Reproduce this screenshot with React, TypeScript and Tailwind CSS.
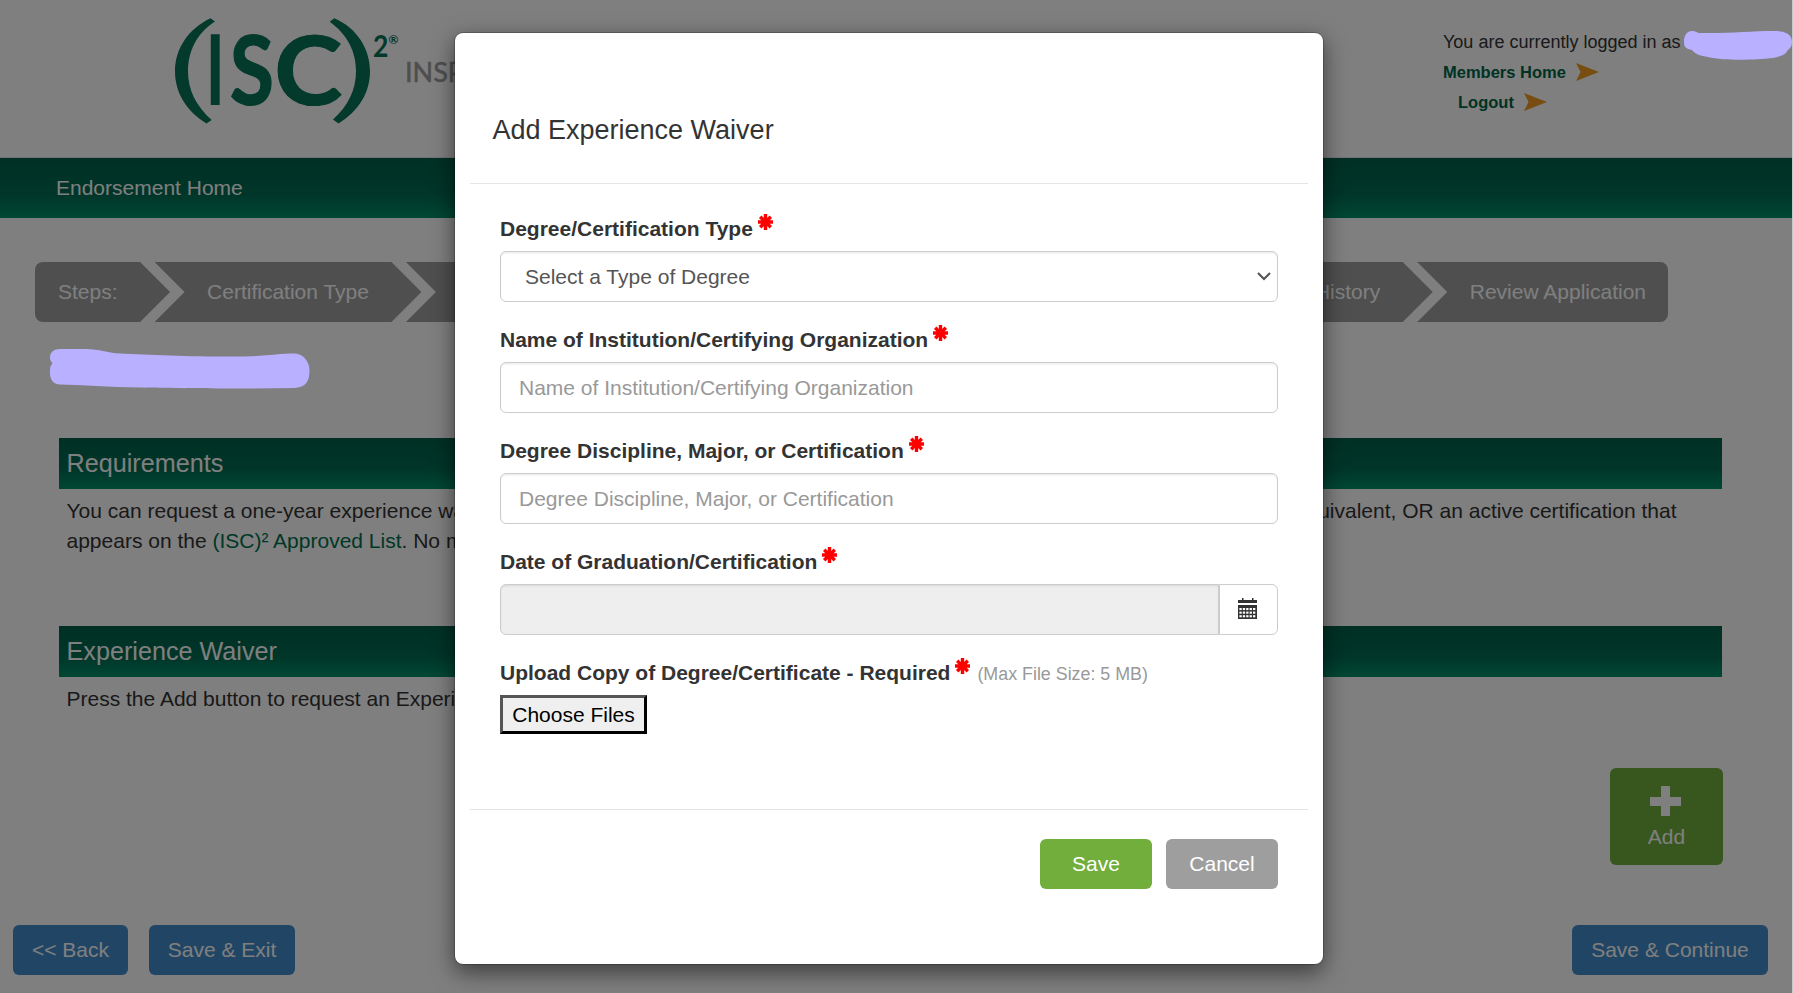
import React from 'react';

const bandClass = 'bg-linear-to-b from-[#006049] from-0% via-[#006c52] via-60% to-[#009069]';

function Logo() {
  return (
    <svg width="400" height="157" viewBox="0 0 400 157" className="block">
      <g fill="#077456">
        <path d="M60.5 18.3 L65 21.5 C46.500 33 38 52 38 71 C38 90 46 106 61.7 120 L56.5 123.5 C36 111 25 92 25 71.5 C25 49 38 29 60.5 18.3 Z" />
        <path d="M184.3 18.3 L179.7 21.7 C198 35 206 52 206 71 C206 90 198 106 183 119.5 L188.5 123.5 C209 111 220 92 220 71.5 C220 49 207 28 184.3 18.3 Z" />
        <g fontFamily="Lato, sans-serif" fontWeight="700">
          <text x="55.5" y="105.3" fontSize="98" textLength="19.5" lengthAdjust="spacingAndGlyphs">I</text>
          <g stroke="#077456" strokeWidth="1.2">
            <text x="79.7" y="104.8" fontSize="96" textLength="44.3" lengthAdjust="spacingAndGlyphs">S</text>
            <text x="124.2" y="104.8" fontSize="96" textLength="68" lengthAdjust="spacingAndGlyphs">C</text>
          </g>
          <text x="223" y="57" fontSize="31" textLength="15.4" lengthAdjust="spacingAndGlyphs">2</text>
          <text x="238.5" y="43.5" fontSize="12" textLength="10" lengthAdjust="spacingAndGlyphs">®</text>
        </g>
      </g>
      <text x="255" y="81.5" fill="#9c9c9c" stroke="#9c9c9c" strokeWidth="0.5" fontFamily="Lato, sans-serif" fontSize="27">
        INSPIRING
      </text>
    </svg>
  );
}

function Arrow() {
  return (
    <svg width="23" height="18" viewBox="0 0 23 18" className="ml-[10px] inline-block">
      <path d="M0 0 L23 9 L0 18 L4.5 9 Z" fill="#ee9a22" />
    </svg>
  );
}

function Asterisk() {
  return (
    <svg width="15" height="16" viewBox="0 0 15 16" className="ml-[5px] shrink-0">
      <circle cx="7.5" cy="8" r="4.4" fill="#f00" />
      <g stroke="#f00" strokeWidth="3.4">
        <path d="M7.5 0 V16 M0 8 H15" />
        <path d="M2.2 2.7 L12.8 13.3 M12.8 2.7 L2.2 13.3" />
      </g>
    </svg>
  );
}

function CalendarIcon() {
  return (
    <svg width="19" height="21" viewBox="0 0 19 21">
      <path fill="#333" d="M0 2 H4 V0 H5.500 V2 H14 V0 H15.500 V2 H19 V5 H0 Z M0 7 H19 V21 H0 Z" />
      <g fill="#fff">
        {[1.4, 4.8, 8.2, 11.6, 15].map((x) =>
          [10, 13.6, 17.2].map((y) => <rect key={`${x}-${y}`} x={x} y={y} width="2.3" height="2.1" />),
        )}
      </g>
    </svg>
  );
}

function Label({ children, note }: { children: React.ReactNode; note?: string }) {
  return (
    <label className="mb-[7px] flex h-[30px] items-start font-bold whitespace-nowrap">
      {children}
      <Asterisk />
      {note && <span className="mt-px ml-[7px] text-[17.85px] font-normal text-[#999]">{note}</span>}
    </label>
  );
}

const fieldClass =
  'h-[51px] w-full rounded-[6px] border border-[#ccc] bg-white shadow-[inset_0_1.5px_1.5px_rgba(0,0,0,0.075)] outline-none placeholder:text-[#999] placeholder:opacity-100';

function Field({ label, children }: { label: string; children: React.ReactNode }) {
  return (
    <div className="mb-[23px]">
      <Label>{label}</Label>
      {children}
    </div>
  );
}

const midStep =
  '-ml-[15.5px] flex items-center bg-[#9e9e9e] pl-[52.5px] pr-[52.5px] [clip-path:polygon(0_0,calc(100%-30px)_0,100%_50%,calc(100%-30px)_100%,0_100%,30px_50%)]';

function Steps() {
  return (
    <div className="mt-[44px] ml-[35px] flex h-[60px] w-[1633px] whitespace-nowrap text-white">
      <div className="flex items-center rounded-l-[8px] bg-[#9e9e9e] pr-[52.5px] pl-[23px] [clip-path:polygon(0_0,calc(100%-30px)_0,100%_50%,calc(100%-30px)_100%,0_100%)]">
        Steps:
      </div>
      <div className={midStep}>Certification Type</div>
      <div className={`${midStep} flex-1 justify-end`}>Employment History</div>
      <div className="-ml-[15.5px] flex items-center rounded-r-[8px] bg-[#9e9e9e] pr-[22px] pl-[52.5px] [clip-path:polygon(0_0,100%_0,100%_100%,0_100%,30px_50%)]">
        Review Application
      </div>
    </div>
  );
}

function BackgroundPage() {
  return (
    <div className="flex h-full flex-col">
      <header className="flex h-[158px] shrink-0 justify-between border-b border-[#e7e7e7]">
        <div className="pl-[150px]">
          <Logo />
        </div>
        <div className="w-[349px] pt-[27px] text-[18px] leading-[30px] whitespace-nowrap">
          <div>You are currently logged in as</div>
          <div className="flex items-center text-[16.5px] font-bold text-[#006549]">
            Members Home
            <Arrow />
          </div>
          <div className="flex items-center pl-[15px] text-[16.5px] font-bold text-[#006549]">
            Logout
            <Arrow />
          </div>
        </div>
      </header>
      <nav className={`${bandClass} flex h-[60px] shrink-0 items-center pl-[56px] text-white`}>Endorsement Home</nav>
      <Steps />
      <main className="mt-[116px] ml-[59px] w-[1662.5px]">
        <h2 className={`${bandClass} flex h-[51px] items-center pb-[2px] pl-[7.5px] text-[25.2px] text-white`}>
          Requirements
        </h2>
        <div className="h-[137px] pt-[7px] pr-[45px] pl-[7.5px] whitespace-nowrap">
          <div className="flex justify-between">
            <span>You can request a one-year experience waiver</span>
            <span>or regional equivalent, OR an active certification that</span>
          </div>
          <p>
            appears on the <a className="text-[#00704f]">(ISC)² Approved List</a>. No more
          </p>
        </div>
        <h2 className={`${bandClass} flex h-[51px] items-center pb-[2px] pl-[7.5px] text-[25.2px] text-white`}>
          Experience Waiver
        </h2>
        <p className="pt-[7px] pl-[7.5px]">Press the Add button to request an Experience</p>
      </main>
      <div className="mt-[54px] flex justify-end pr-[69px]">
        <button className="flex h-[97px] w-[113px] flex-col items-center rounded-[6px] bg-[#71ae3c] pt-[18px] text-white">
          <svg width="31" height="30" viewBox="0 0 31 30" className="mr-[2px]">
            <path d="M11 0 H20 V11 H31 V20 H20 V30 H11 V20 H0 V11 H11 Z" fill="#fff" />
          </svg>
          <span className="mt-[6px]">Add</span>
        </button>
      </div>
      <footer className="mt-[60px] flex gap-[21px] pr-[24px] pl-[13px] text-white">
        <button className="h-[50px] w-[115px] rounded-[6px] bg-[#428bca]">&lt;&lt; Back</button>
        <button className="h-[50px] w-[146px] rounded-[6px] bg-[#428bca]">Save &amp; Exit</button>
        <button className="ml-auto h-[50px] w-[196px] rounded-[6px] bg-[#428bca]">Save &amp; Continue</button>
      </footer>
    </div>
  );
}

function WaiverDialog() {
  return (
    <div
      role="dialog"
      className="mt-[32px] ml-[454px] flex h-[933px] w-[870px] flex-col rounded-[9px] border border-black/20 bg-white bg-clip-padding px-[15px] shadow-[0_7.5px_22.5px_rgba(0,0,0,0.5)]"
    >
      <div className="h-[151px] shrink-0 border-b border-[#e5e5e5] pt-[78px] pl-[22.5px]">
        <h4 className="text-[27px] leading-[38.5px]">Add Experience Waiver</h4>
      </div>
      <div className="h-[625px] shrink-0 px-[30px] pt-[30px]">
        <Field label="Degree/Certification Type">
          <div className="relative">
            <select className={`${fieldClass} appearance-none pl-[24px] text-[#555]`}>
              <option>Select a Type of Degree</option>
            </select>
            <svg width="14" height="9" viewBox="0 0 14 9" className="pointer-events-none absolute top-[21px] right-[7px]">
              <path d="M1 1 L7 7 L13 1" fill="none" stroke="#555" strokeWidth="2.1" />
            </svg>
          </div>
        </Field>
        <Field label="Name of Institution/Certifying Organization">
          <input className={`${fieldClass} block pl-[18px]`} placeholder="Name of Institution/Certifying Organization" />
        </Field>
        <Field label="Degree Discipline, Major, or Certification">
          <input className={`${fieldClass} block pl-[18px]`} placeholder="Degree Discipline, Major, or Certification" />
        </Field>
        <Field label="Date of Graduation/Certification">
          <div className="flex">
            <input
              readOnly
              className="h-[51px] w-[719px] rounded-l-[6px] border border-[#ccc] bg-[#eee] shadow-[inset_0_1.5px_1.5px_rgba(0,0,0,0.075)] outline-none"
            />
            <button className="flex h-[51px] flex-1 items-center justify-center rounded-r-[6px] border border-[#ccc] pr-[2px] pb-[2px]">
              <CalendarIcon />
            </button>
          </div>
        </Field>
        <Label note="(Max File Size: 5 MB)">Upload Copy of Degree/Certificate - Required</Label>
        <button className="block h-[39px] w-[147px] border-[3px] border-t-[#555] border-r-black border-b-black border-l-[#555] bg-[#efefef] text-black">
          Choose Files
        </button>
      </div>
      <div className="flex gap-[14px] border-t border-[#e5e5e5] pt-[29px] pr-[30px] text-white">
        <button className="ml-auto h-[50px] w-[112px] rounded-[6px] bg-[#71ae3c]">Save</button>
        <button className="h-[50px] w-[112px] rounded-[6px] bg-[#9e9e9e]">Cancel</button>
      </div>
    </div>
  );
}

export default function App() {
  return (
    <div className="h-[993px] w-full overflow-hidden bg-[#c8c8c8] font-['Liberation_Sans',Arial,sans-serif] text-[21px] leading-[30px] text-[#333]">
      <div className="relative h-[993px] w-[1792px] overflow-hidden bg-white">
        <BackgroundPage />
        <div className="absolute inset-0 bg-black/50">
          <WaiverDialog />
        </div>
        <svg width="1792" height="400" viewBox="0 0 1792 400" className="pointer-events-none absolute top-0 left-0">
          <g fill="#b9b0ff">
            <path d="M1684 42 C1684 35 1687 31 1692 31 C1696 31 1697 33 1700 33 C1730 33.5 1750 31 1774 31 C1784 31 1792 33 1792 42 C1792 47 1790 48 1787 51 C1786 55 1778 57 1773 58 C1755 60 1725 61 1708 57 C1701 56 1695 54 1692 50 C1686 49 1684 47 1684 42 Z" />
            <path d="M50 358 C50 352 54 349 60 349 H86 C100 349 106 353 120 353.5 C150 355 200 357 245 356.5 C265 356 280 353.5 295 353.5 C303 353.5 309.5 362 309.5 370 C309.5 380 307 387 295 388 C230 389 160 388 140 387.5 C110 387 80 385 60 384.5 C53 384.5 50 379 50 373 C50 368 50 366 52.5 363.5 C50.5 361 50 360 50 358 Z" />
          </g>
        </svg>
      </div>
    </div>
  );
}
